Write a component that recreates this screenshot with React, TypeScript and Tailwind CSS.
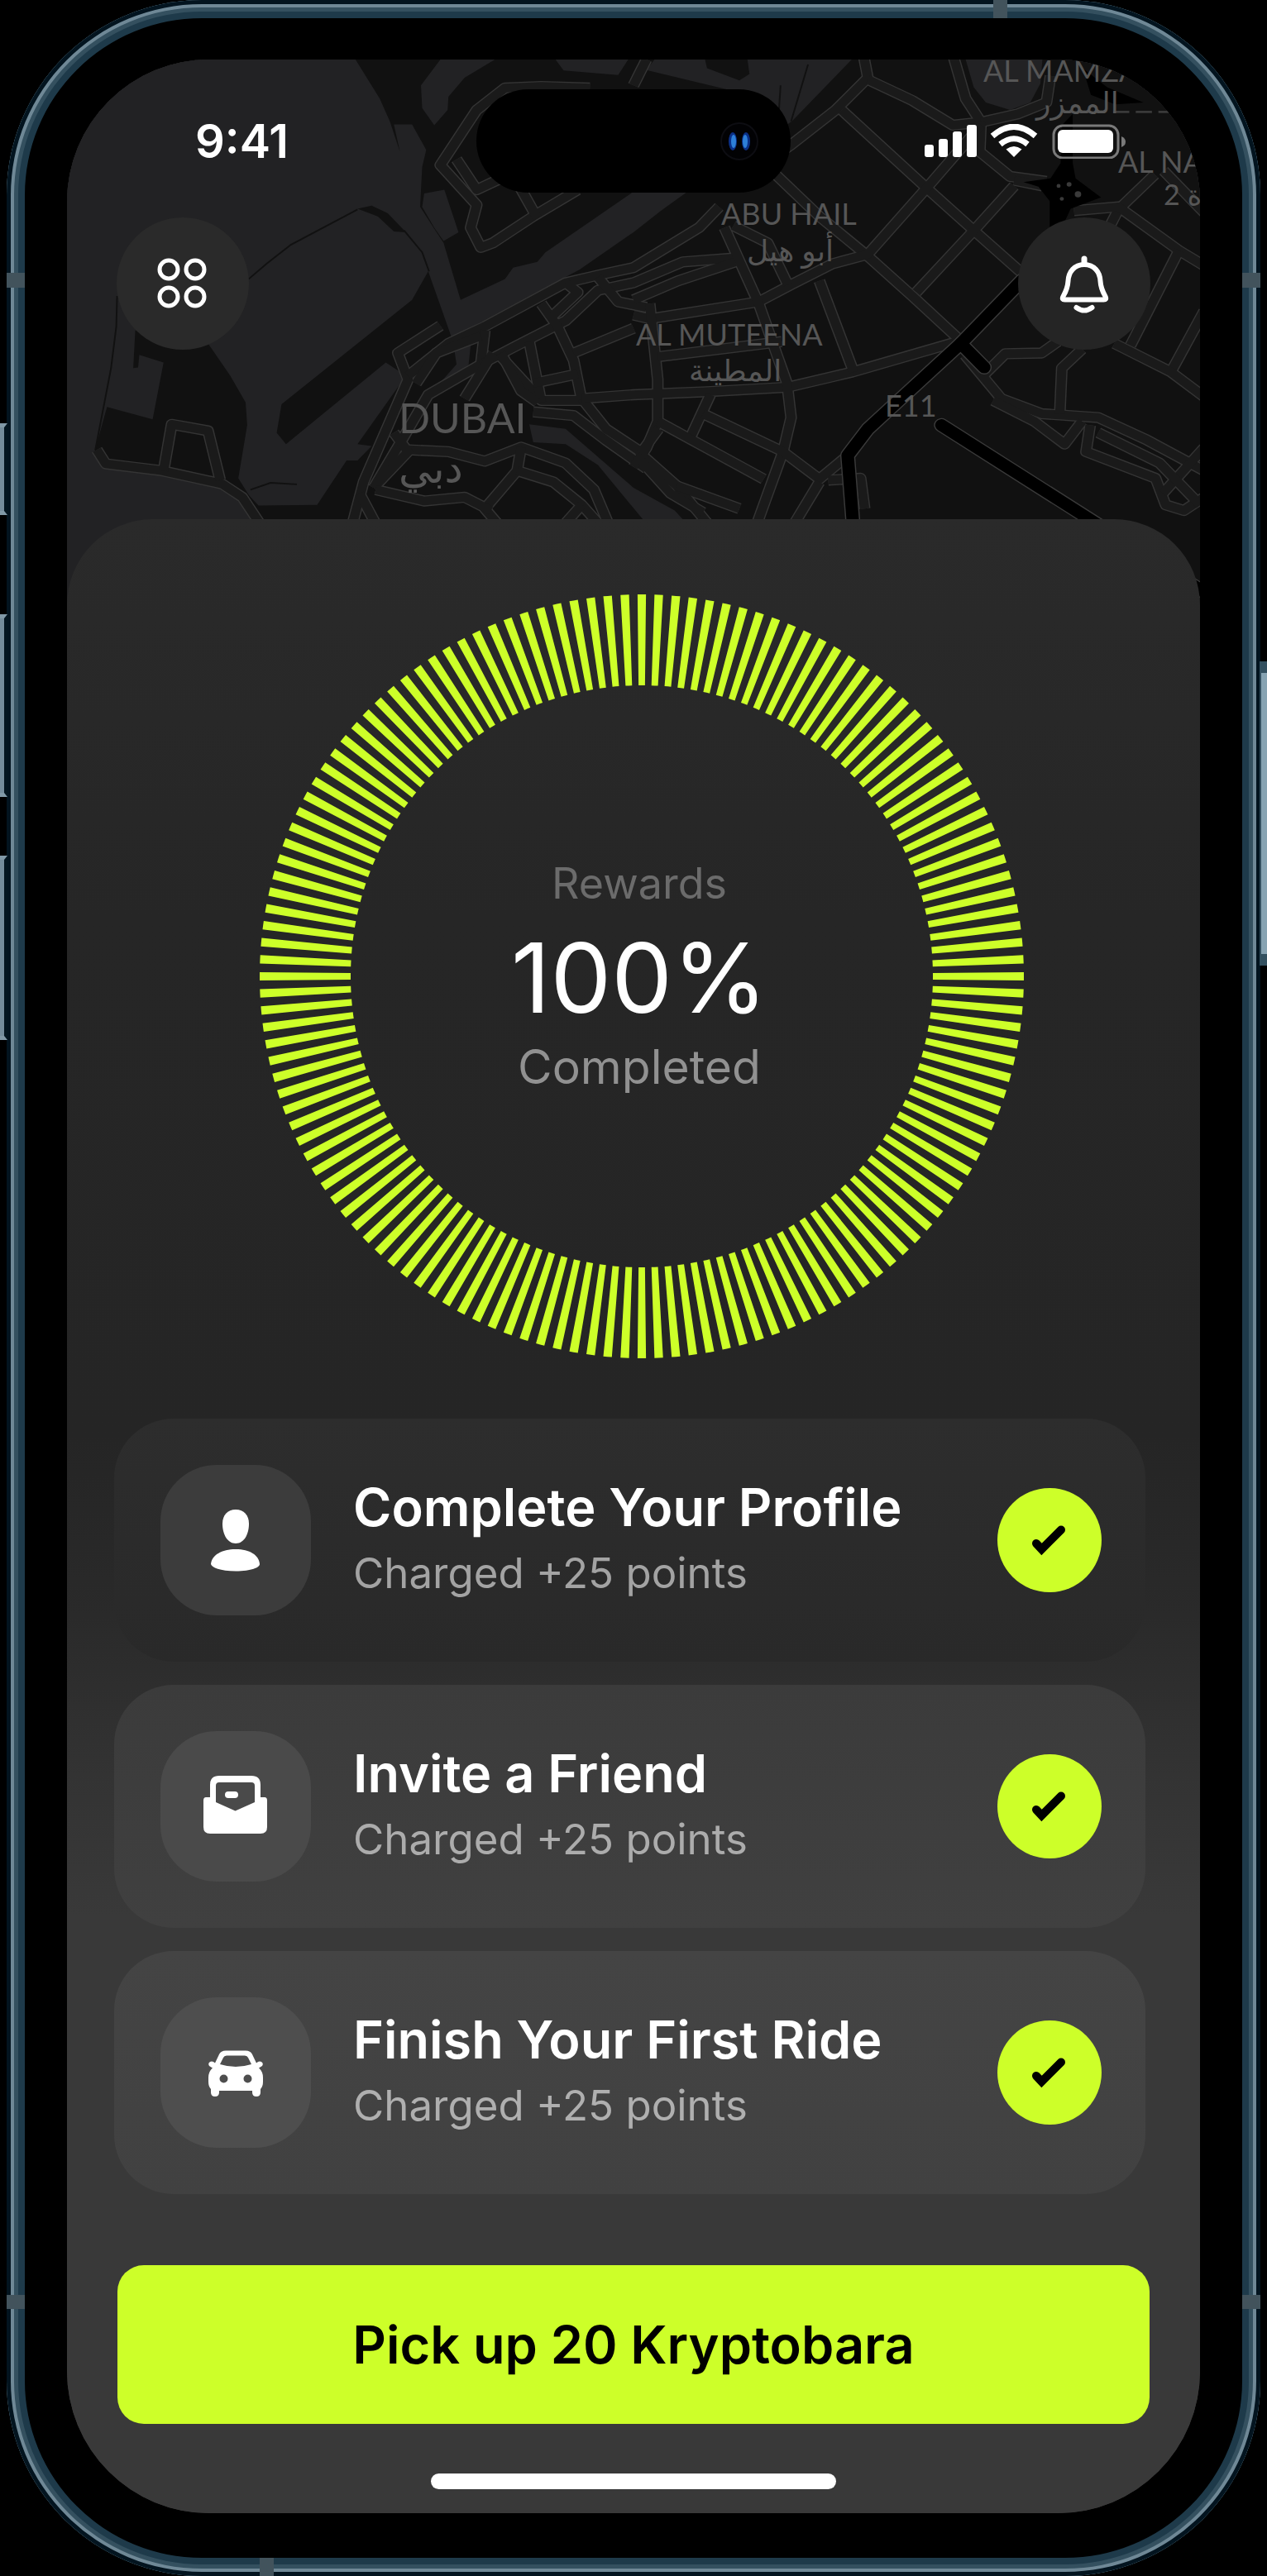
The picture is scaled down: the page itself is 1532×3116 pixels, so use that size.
import React from "react";

/* ---------- Map ---------- */

const LAND = [
  "880,157 940,260 965,320 990,400 975,328 1020,328 1055,395 1045,440 1040,545 1075,603 1098,640 1140,790 1250,735 1270,705 1330,690 1350,665 1568,505 1800,330 1800,236 1600,185 1620,157",
  "885,550 920,542 960,562 1005,612 975,610 935,570",
  "1060,715 1020,790 697,1065 685,1140 708,1170 955,955 1005,990 885,1170 920,1175 885,1213 858,1213 785,1330 640,1332 612,1300 590,1262 650,1367 650,1600 3000,1600 3000,157 2108,157 1960,320 1760,460 1640,552 1568,612 1435,710 1118,890",
  "335,870 515,905 570,990 608,1060 612,1120 590,1260 660,1380 560,1275 260,1222 235,1188 265,1072 378,1105 405,955 345,935 342,968 330,970",
  "1745,157 1750,180 1830,212 1855,195 1850,157",
];

const WATER = [
  "1090,157 1225,157 1150,205 1110,255 1108,290 1075,330 1045,285 1042,225",
  "1375,157 1555,157 1530,198 1395,186",
  "1050,510 1100,500 1135,612 1098,635 1075,600 1045,545",
  "1310,1118 1400,1130 1568,1285 1670,1345 1700,1380 1600,1380 1480,1225 1400,1170 1320,1165",
  "2390,157 2410,230 2440,270 2500,290 2550,270 2575,220 2580,157",
  "1120,890 1165,910 1160,960 1110,1010 1060,1060 1080,1020 1130,960",
];

const SHORE = [
  "616,735 660,695 720,645 885,552",
  "1000,607 1045,665 1062,715",
  "290,780 288,860 275,970 236,1186",
  "620,1290 670,1272 735,1276",
  "1958,320 2000,170",
  "1932,225 1928,290",
];

const ROADS = [
  "1090,858 985,930 1010,1000 900,1270 870,1390",
  "1010,990 1110,905 1200,860 1400,745 1480,725 1568,705 1730,600 1780,545",
  "1200,870 1190,960 1060,1040 1000,1150 925,1285",
  "1190,960 1280,910 1400,845 1480,765 1568,745 1690,690 1815,680",
  "1030,1010 1080,930 1190,885",
  "1150,1050 1220,930",
  "1340,800 1380,860 1420,950 1440,1055 1340,1055 1240,940",
  "1310,900 1340,1060",
  "1420,930 1568,865",
  "1320,1010 1430,985",
  "1400,745 1430,770 1370,830",
  "1480,730 1530,795 1600,810",
  "1330,1060 1290,1030 1240,930",
  "1440,1050 1500,1130 1600,1200",
  "1440,1050 1568,1040 1750,1032 1950,1020 2110,980 2370,900",
  "1010,1185 1110,1190 1200,1215 1290,1178 1400,1220 1470,1290 1510,1390",
  "925,1285 1010,1190 975,1140",
  "1290,1178 1280,1240 1200,1340 1240,1390",
  "930,1290 1050,1320 1150,1310 1215,1345",
  "1280,1240 1370,1270 1440,1330 1490,1390",
  "1440,1330 1390,1390",
  "890,1300 935,1390",
  "1320,1085 1420,1095 1500,1160 1600,1235",
  "240,1185 262,1222 400,1240 550,1275 600,1310 650,1390",
  "405,1240 425,1118 515,1135 545,1265",
  "1460,232 1340,228 1250,232 1180,290 1090,435 1180,540 1165,600 1190,652 1220,640 1320,570 1430,500",
  "1130,420 1180,500 1240,470",
  "1280,480 1330,575",
  "1568,225 1600,157",
  "2138,150 2148,205 2068,290 1960,380 1900,425",
  "2148,210 2258,265 2358,330 2428,322",
  "2428,322 2390,260 2360,150",
  "2428,322 2520,300 2590,270 2600,200",
  "2428,322 2425,400 2500,465 2590,478",
  "2083,290 2298,500 2408,605 2530,720",
  "1915,455 2028,570 2148,675 2258,780 2375,895",
  "2428,330 2298,490 2148,670 2060,695 1958,750 1878,795 1608,840 1568,830",
  "2510,490 2408,610 2268,770",
  "2510,475 2580,490",
  "2858,460 2768,552 2745,600",
  "2658,555 2768,545 2918,660 2980,700",
  "2918,660 2798,910",
  "2980,820 2898,980",
  "2758,905 2898,980 2980,1045",
  "2880,450 2980,560",
  "2028,740 2113,980",
  "1793,600 1878,800 1948,1010 1958,1100 1938,1190 1870,1390",
  "1815,595 1900,640 1950,750",
  "1568,790 1678,740 1820,690",
  "1608,800 1628,1000 1628,1110 1600,1180 1568,1230",
  "1628,940 1935,900",
  "1758,1040 1710,1150",
  "1628,1110 1890,1262",
  "1740,1090 1938,1190 2028,1262 2110,1190",
  "2028,1270 1960,1390",
  "1630,1130 1585,1195 1675,1280 1760,1390",
  "1675,1280 1830,1340",
  "1575,1200 1660,1300 1740,1350",
  "2050,1265 2130,1260 2140,1340",
  "2388,935 2478,1050 2578,1090 2718,1100 2840,1160 2980,1240",
  "2438,985 2488,932 2578,930 2618,900",
  "2678,920 2628,970 2623,1090",
  "2458,1055 2560,1110 2635,1170 2678,1110",
  "2698,1120 2688,1190 2860,1260 2885,1330 2930,1345 2980,1310",
  "2980,1180 2878,1300",
  "2718,1140 2870,1220 2970,1330",
];

const HIGHWAYS = [
  "2530,738 2378,905 2148,1130 2098,1200 2112,1390",
  "2378,905 2436,968",
  "2330,1120 2700,1370 2980,1560",
];

type Label = { text: string; place: string };

const LABELS: Label[] = [
  { text: "AL MAMZAR", place: "left-[1108px] -top-[12px] text-[36px]" },
  { text: "الممزر", place: "left-[1172px] top-[26px] text-[36px]" },
  { text: "AL NAHDA", place: "left-[1271px] top-[98px] text-[36px]" },
  { text: "2 ة", place: "left-[1326px] top-[138px] text-[34px]" },
  { text: "ABU HAIL", place: "left-[791px] top-[161px] text-[36px]" },
  { text: "أبو هيل", place: "left-[822px] top-[205px] text-[36px]" },
  { text: "AL MUTEENA", place: "left-[688px] top-[307px] text-[36px]" },
  { text: "المطينة", place: "left-[752px] top-[350px] text-[36px]" },
  { text: "DUBAI", place: "left-[401px] top-[408px] text-[50px]" },
  { text: "دبي", place: "left-[401px] top-[468px] text-[50px]" },
  { text: "E11", place: "left-[989px] top-[393px] text-[36px]" },
];

function CityMap() {
  return (
    <div className="absolute inset-x-0 top-0 h-[670px] overflow-hidden bg-[#222224]" aria-hidden="true">
      <svg viewBox="166 157 2804 1459" preserveAspectRatio="none" className="h-full w-full">
        <rect x="166" y="157" width="2804" height="1459" fill="#222224" />
        {LAND.map((p) => (
          <polygon key={p} points={p} fill="#111111" />
        ))}
        {WATER.map((p) => (
          <polygon key={p} points={p} fill="#222224" />
        ))}
        <g fill="none" stroke="#111111" strokeWidth="4">
          {SHORE.map((p) => (
            <polyline key={p} points={p} />
          ))}
        </g>
        <g fill="none" stroke="#343434" strokeWidth="29" strokeLinejoin="round">
          {ROADS.map((p) => (
            <polyline key={p} points={p} />
          ))}
        </g>
        <g fill="none" stroke="#1a1a1a" strokeWidth="23" strokeLinejoin="round">
          {ROADS.map((p) => (
            <polyline key={p} points={p} />
          ))}
        </g>
        <g fill="none" stroke="#3a3a3a" strokeWidth="37" strokeLinejoin="round" strokeLinecap="round">
          {HIGHWAYS.map((p) => (
            <polyline key={p} points={p} />
          ))}
        </g>
        <g fill="none" stroke="#000000" strokeWidth="31" strokeLinejoin="round" strokeLinecap="round">
          {HIGHWAYS.map((p) => (
            <polyline key={p} points={p} />
          ))}
        </g>
        <path
          d="M2533 480 L2600 470 L2625 430 L2628 330 L2655 300 L2655 430 L2662 470 L2725 520 L2650 550 L2628 600 L2598 600 L2598 530 L2570 492 Z"
          fill="#000000"
        />
        <path d="M2680 180 L2740 230 L2830 270 L2760 275 L2700 250 Z" fill="#000000" />
        <path d="M2755 295 H2900" stroke="#3a3a3a" strokeWidth="6" strokeDasharray="40 16" fill="none" />
        <g fill="#3a3a3a">
          <circle cx="2620" cy="490" r="5" />
          <circle cx="2646" cy="486" r="6" />
          <circle cx="2668" cy="512" r="8" />
          <circle cx="2628" cy="524" r="5" />
        </g>
      </svg>
      {LABELS.map((l) => (
        <span
          key={l.text}
          className={"absolute whitespace-nowrap leading-[50px] text-[#565656] [font-family:Lato,'DejaVu_Sans',sans-serif] " + l.place}
        >
          {l.text}
        </span>
      ))}
    </div>
  );
}

/* ---------- Status bar ---------- */

function StatusBar() {
  return (
    <div className="grid grid-cols-[1fr_380px_1fr] items-center">
      <span className="pl-[155px] text-[56px] leading-[64px] font-semibold text-white">9:41</span>
      <div className="flex h-[125px] items-center justify-end rounded-full bg-black pr-[38px]">
        <svg viewBox="0 0 48 48" className="size-12">
          <circle cx="24" cy="24" r="22" fill="#020204" stroke="#0d0d12" strokeWidth="2" />
          <ellipse cx="16" cy="24" rx="5" ry="11" fill="#0a2f86" />
          <ellipse cx="32" cy="24" rx="5" ry="11" fill="#0a2f86" />
          <ellipse cx="17" cy="24" rx="3" ry="8" fill="#2d7fd8" />
          <ellipse cx="31" cy="24" rx="3" ry="8" fill="#2d7fd8" />
        </svg>
      </div>
      <svg viewBox="0 0 243 42" className="mr-[90px] h-[42px] w-[243px] justify-self-end" role="img" aria-label="Signal, Wi-Fi and battery">
        <g fill="#ffffff">
          <rect x="0" y="25" width="11" height="15" rx="3" />
          <rect x="17" y="18" width="11" height="22" rx="3" />
          <rect x="34" y="9" width="11" height="31" rx="3" />
          <rect x="51" y="1" width="12" height="39" rx="3" />
          <path d="M108 40 L98.500 30.500 Q108 23.500 117.500 30.500 Z" />
          <rect x="161" y="7" width="67" height="28" rx="6" />
        </g>
        <g fill="none" stroke="#ffffff" strokeWidth="7">
          <path d="M82 14.500 Q108 -8 134 14.500" />
          <path d="M91.500 24.500 Q108 11 124.500 24.500" />
        </g>
        <rect x="156" y="2" width="78" height="39" rx="11" fill="none" stroke="#7a7a7a" strokeWidth="3" />
        <path d="M238 15 Q243 17 243 21.500 Q243 26 238 28 Z" fill="#7a7a7a" />
      </svg>
    </div>
  );
}

/* ---------- Icons ---------- */

function GridIcon() {
  return (
    <svg viewBox="0 0 160 160" className="size-full" fill="none" stroke="#ffffff" strokeWidth="5">
      <circle cx="63" cy="63" r="11" />
      <circle cx="95" cy="63" r="11" />
      <circle cx="63" cy="96" r="11" />
      <circle cx="95" cy="96" r="11" />
    </svg>
  );
}

function BellIcon() {
  return (
    <svg viewBox="0 0 160 160" className="size-full" fill="none" stroke="#ffffff" strokeWidth="6" strokeLinecap="round" strokeLinejoin="round">
      <path d="M80 50 V56" strokeWidth="7" />
      <path d="M80 57 C68 57 61 66 60.500 77 C60 86 57 91 54.500 95.500 C53 98.500 54 99.500 56.500 99.500 H103.500 C106 99.500 107 98.500 105.500 95.500 C103 91 100 86 99.500 77 C99 66 92 57 80 57 Z" />
      <path d="M70.500 109 Q80 116 89.500 109" />
    </svg>
  );
}

function PersonIcon() {
  return (
    <svg viewBox="0 0 182 182" className="size-full" fill="#ffffff">
      <path d="M91 54 C101 54 107 61 107 71 C107 84 101 95 91 95 C81 95 75 84 75 71 C75 61 81 54 91 54 Z" />
      <path d="M91 102 C108 102 119 109 120 120 C120 124 110 128.500 91 128.500 C72 128.500 62 124 61 120 C62 109 74 102 91 102 Z" />
    </svg>
  );
}

function InviteIcon() {
  return (
    <svg viewBox="0 0 182 182" className="size-full" fill="#ffffff">
      <path
        fillRule="evenodd"
        d="M60 80 V65 Q60 54 71 54 H110 Q121 54 121 65 V80 H126 Q129 80 129 84 V116 Q129 124 121 124 H60 Q52 124 52 116 V84 Q52 80 55 80 Z M71 62 Q67 62 67 66 V86 L90.500 96.500 L114 86 V66 Q114 62 110 62 Z"
      />
      <rect x="78" y="73" width="16" height="8" rx="4" />
    </svg>
  );
}

function CarIcon() {
  return (
    <svg viewBox="0 0 182 182" className="size-full" fill="#ffffff">
      <path
        fillRule="evenodd"
        d="M79 64.500 H103 Q109 64.500 111 69 L116 79.500 Q119 76.500 122 78 Q125 80 123 83 L119 85.500 Q124 90 124 97 V102 Q124 108 121 111 V115 Q121 120 116 120 Q111 120 111 115 V113 H71 V115 Q71 120 66 120 Q61 120 61 115 V111 Q58 108 58 102 V97 Q58 90 63 85.500 L59 83 Q57 80 60 78 Q63 76.500 66 79.500 L71 69 Q73 64.500 79 64.500 Z M80 70.500 Q77 70.500 76 73 L72 81 Q91 87 110 81 L106 73 Q105 70.500 102 70.500 Z M76.500 93.500 A5 5 0 1 0 76.500 103.500 A5 5 0 1 0 76.500 93.500 Z M105.500 93.500 A5 5 0 1 0 105.500 103.500 A5 5 0 1 0 105.500 93.500 Z"
      />
    </svg>
  );
}

function CheckBadge() {
  return (
    <span className="size-[126px] shrink-0 rounded-full bg-[#cdff29]">
      <svg viewBox="0 0 126 126" className="size-full" role="img" aria-label="Done">
        <path d="M47 67 L53.500 74 L77 50.500" fill="none" stroke="#000000" strokeWidth="10" strokeLinecap="round" />
      </svg>
    </span>
  );
}

/* ---------- Reward content ---------- */

function ProgressRing() {
  return (
    <div className="relative size-[924px]">
      <svg viewBox="0 0 924 924" className="size-full" aria-hidden="true">
        <circle
          cx="462"
          cy="462"
          r="407"
          fill="none"
          stroke="#cdff29"
          strokeWidth="110"
          pathLength="280"
          strokeDasharray="1 1"
          strokeDashoffset="0.5"
        />
      </svg>
      <div className="absolute inset-0 flex flex-col items-center justify-center pr-1.5">
        <p className="text-[52px] leading-[64px] text-[#6b6b6b]">Rewards</p>
        <p className="mt-6 text-[117px] leading-[116px] text-white">100%</p>
        <p className="mt-4 text-[57px] leading-[68px] text-[#919191]">Completed</p>
      </div>
    </div>
  );
}

const TASKS = [
  {
    title: "Complete Your Profile",
    icon: <PersonIcon />,
    card: "bg-linear-to-b from-[#2d2d2d] to-[#292929]",
    tile: "bg-[#3c3c3c]",
    note: "text-[#a3a3a3]",
  },
  {
    title: "Invite a Friend",
    icon: <InviteIcon />,
    card: "bg-linear-to-b from-[#3b3b3b] to-[#404040]",
    tile: "bg-[#4a4a4a]",
    note: "text-[#acacac]",
  },
  {
    title: "Finish Your First Ride",
    icon: <CarIcon />,
    card: "bg-linear-to-b from-[#444444] to-[#414141]",
    tile: "bg-[#4e4e4e]",
    note: "text-[#afafaf]",
  },
];

function TaskList() {
  return (
    <ul className="mt-[73px] mr-[66px] ml-[57px] flex flex-col gap-7">
      {TASKS.map((t) => (
        <li key={t.title} className={"flex items-center rounded-[72px] py-14 pr-[53px] pl-14 " + t.card}>
          <span className={"size-[182px] shrink-0 rounded-[68px] " + t.tile}>{t.icon}</span>
          <div className="ml-[51px] min-w-0 flex-1 pb-1.5">
            <h2 className="text-[63px] leading-[76px] font-semibold text-white">{t.title}</h2>
            <p className={"mt-2.5 text-[51px] leading-[64px] " + t.note}>Charged +25 points</p>
          </div>
          <CheckBadge />
        </li>
      ))}
    </ul>
  );
}

/* ---------- Device ---------- */

function Hardware() {
  const notch = "absolute bg-[#42535c]";
  const left = "absolute left-0 w-[9px] border-y-[5px] border-r-4 border-y-[#8199a7] border-r-[#041620] bg-[#748c9b]";
  return (
    <div aria-hidden="true">
      <span className={notch + " top-[330px] left-2 h-[18px] w-[22px]"} />
      <span className={notch + " top-[330px] right-2 h-[18px] w-[22px]"} />
      <span className={notch + " bottom-[323px] left-2 h-[17px] w-[22px]"} />
      <span className={notch + " right-2 bottom-[323px] h-[17px] w-[22px]"} />
      <span className={notch + " top-0 right-[314px] h-[22px] w-[17px]"} />
      <span className={notch + " bottom-0 left-[314px] h-[22px] w-[17px]"} />
      <span className={left + " top-[512px] h-[111px]"} />
      <span className={left + " top-[743px] h-[221px]"} />
      <span className={left + " top-[1035px] h-[223px]"} />
      <span className="absolute top-[800px] right-0 h-[368px] w-[9px] border-y-[14px] border-l-2 border-y-[#33505f] border-l-[#33505f] bg-[#87a3b2]" />
    </div>
  );
}

export default function App() {
  return (
    <div className="relative flex min-h-screen w-full bg-black px-2 font-['Inter',sans-serif]">
      <div className="flex flex-1 rounded-[236px] bg-black px-[73px] pt-[72px] pb-[76px] shadow-[inset_0_0_0_5px_#03141f,inset_0_0_0_9px_#6f8896,inset_0_0_0_14px_#34505f,inset_0_0_0_22px_#1e3a4a]">
        <main className="relative isolate flex flex-1 flex-col overflow-hidden rounded-[172px] bg-[#393939]">
          <CityMap />
          <header className="relative pt-9">
            <StatusBar />
            <div className="mt-[30px] flex justify-between px-[60px]">
              <button type="button" aria-label="Menu" className="size-40 rounded-full bg-[#2a2a2a]">
                <GridIcon />
              </button>
              <button type="button" aria-label="Notifications" className="size-40 rounded-full bg-[#252525]">
                <BellIcon />
              </button>
            </div>
          </header>
          <section className="relative mt-[205px] flex flex-1 flex-col rounded-t-[104px] bg-[linear-gradient(180deg,#2a2a2a_0%,#262626_20%,#252525_46%,#2a2a2a_55%,#333333_63%,#393939_70%,#393939_100%)] pt-[91px]">
            <div className="flex justify-center pl-5">
              <ProgressRing />
            </div>
            <TaskList />
            <button
              type="button"
              className="mx-[61px] mt-[86px] h-48 rounded-[32px] bg-[#cdff29] text-[63px] leading-[76px] font-semibold text-black"
            >
              Pick up 20 Kryptobara
            </button>
            <div className="mx-auto mt-[60px] mb-[29px] h-[19px] w-[490px] rounded-full bg-white" />
          </section>
        </main>
      </div>
      <Hardware />
    </div>
  );
}
